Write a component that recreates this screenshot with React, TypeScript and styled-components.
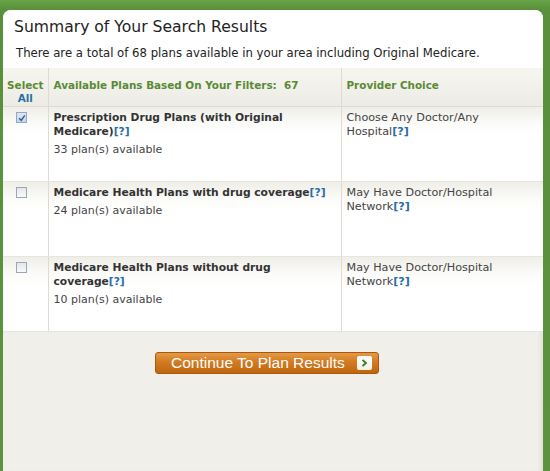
import styled, { createGlobalStyle } from "styled-components";

const GlobalStyle = createGlobalStyle`
  html, body {
    margin: 0;
    padding: 0;
  }
  body {
    font-family: "DejaVu Sans", Verdana, sans-serif;
  }
`;

const green = "#5d933e";
const headGreen = "#5a8a34";
const linkBlue = "#2b6ea3";
const lineColor = "#dedcd2";

const Frame = styled.div`
  width: 550px;
  height: 471px;
  box-sizing: border-box;
  padding: 10px 7px 0 3px;
  background: linear-gradient(to bottom, #68a447 0, #5a8f3b 10px, ${green} 100%);
`;

const Panel = styled.div`
  height: 100%;
  background: #f0efe9;
  border-radius: 8px 8px 0 0;
  overflow: hidden;
  box-shadow: inset -5px 0 5px -3px rgba(0, 0, 0, 0.08);
`;

const Header = styled.div`
  background: #fff;
  padding: 8px 12px 7px 11px;
`;

const Title = styled.h2`
  margin: 0;
  font-size: 15.6px;
  line-height: 18px;
  font-weight: normal;
  color: #222;
`;

const Subtitle = styled.p`
  margin: 10px 0 0 2px;
  font-size: 11.7px;
  line-height: 15px;
  color: #222;
`;

const Table = styled.table`
  width: 100%;
  border-collapse: collapse;
  table-layout: fixed;
`;

const HeadCell = styled.th<{ $w?: number; $center?: boolean }>`
  width: ${(p) => (p.$w ? `${p.$w}px` : "auto")};
  height: 38px;
  box-sizing: border-box;
  padding: 11px 5px 0;
  vertical-align: top;
  text-align: ${(p) => (p.$center ? "center" : "left")};
  font-size: 10.4px;
  line-height: 13px;
  font-weight: bold;
  color: ${headGreen};
  background: linear-gradient(to bottom, #f6f5f0, #ecebe4);
  border-left: 1px solid ${lineColor};
  border-bottom: 1px solid ${lineColor};

  &:first-child {
    border-left: none;
    padding: 11px 0 0;
  }
`;

const AllLink = styled.span`
  color: ${linkBlue};
`;

const Row = styled.tr`
  height: 75px;
  background: linear-gradient(to bottom, #eeede7 0, #fbfbf9 18px, #fff 30px);
`;

const Cell = styled.td`
  vertical-align: top;
  padding: 4px 10px 0 5px;
  font-size: 11px;
  line-height: 14px;
  color: #444;
  border-left: 1px solid ${lineColor};
  border-bottom: 1px solid #e6e5de;

  &:first-child {
    border-left: none;
    padding: 5px 0 0 13px;
  }
`;

const ProviderCell = styled(Cell)`
  font-size: 11.2px;
`;

const PlanName = styled.div`
  font-weight: bold;
  font-size: 10.7px;
  color: #333;
`;

const Count = styled.div`
  margin-top: 4px;
  color: #444;
`;

const Help = styled.span`
  color: ${linkBlue};
  font-weight: bold;
`;

const Box = styled.span<{ $checked?: boolean }>`
  display: inline-flex;
  align-items: center;
  justify-content: center;
  width: 11px;
  height: 11px;
  box-sizing: border-box;
  border: 1px solid #9aa7b8;
  background: ${(p) =>
    p.$checked
      ? "linear-gradient(to bottom, #dde8f4, #c4d6ea)"
      : "linear-gradient(to bottom, #e6e6e6, #fafafa)"};
`;

const Footer = styled.div`
  display: flex;
  justify-content: center;
  padding: 20px 12px 0 0;
`;

const Button = styled.button`
  display: flex;
  align-items: center;
  gap: 12px;
  width: 224px;
  height: 22px;
  padding: 0 5px 0 15px;
  box-sizing: border-box;
  border: 1px solid #a9590f;
  border-radius: 3px;
  background: linear-gradient(to bottom, #e59a45 0, #d27a22 45%, #c0650f 100%);
  color: #fff;
  font-family: "Liberation Sans", Arial, sans-serif;
  font-size: 15.5px;
  cursor: pointer;
`;

const Arrow = styled.span`
  display: inline-flex;
  align-items: center;
  justify-content: center;
  width: 15px;
  height: 14px;
  border-radius: 2px;
  background: linear-gradient(to bottom, #ffffff, #eef2e2);
`;

const plans = [
  {
    name: "Prescription Drug Plans (with Original Medicare)",
    count: 33,
    provider: "Choose Any Doctor/Any Hospital",
    checked: true,
  },
  {
    name: "Medicare Health Plans with drug coverage",
    count: 24,
    provider: "May Have Doctor/Hospital Network",
    checked: false,
  },
  {
    name: "Medicare Health Plans without drug coverage",
    count: 10,
    provider: "May Have Doctor/Hospital Network",
    checked: false,
  },
];

const App = () => {
  return (
    <>
      <GlobalStyle />
      <Frame>
        <Panel>
          <Header>
            <Title>Summary of Your Search Results</Title>
            <Subtitle>
              There are a total of 68 plans available in your area including Original Medicare.
            </Subtitle>
          </Header>
          <Table>
            <thead>
              <tr>
                <HeadCell $w={45} $center>
                  Select
                  <br />
                  <AllLink>All</AllLink>
                </HeadCell>
                <HeadCell $w={293}>Available Plans Based On Your Filters:&nbsp;&nbsp;67</HeadCell>
                <HeadCell>Provider Choice</HeadCell>
              </tr>
            </thead>
            <tbody>
              {plans.map((plan) => (
                <Row key={plan.name}>
                  <Cell>
                    <Box $checked={plan.checked}>
                      {plan.checked && (
                        <svg width="8" height="8" viewBox="0 0 8 8">
                          <path d="M1.2 4.2 L3.2 6.4 L6.8 1.4" fill="none" stroke="#2d5c9a" strokeWidth="1.4" />
                        </svg>
                      )}
                    </Box>
                  </Cell>
                  <Cell>
                    <PlanName>
                      {plan.name}
                      <Help>[?]</Help>
                    </PlanName>
                    <Count>{plan.count} plan(s) available</Count>
                  </Cell>
                  <ProviderCell>
                    {plan.provider}
                    <Help>[?]</Help>
                  </ProviderCell>
                </Row>
              ))}
            </tbody>
          </Table>
          <Footer>
            <Button>
              Continue To Plan Results
              <Arrow>
                <svg width="7" height="8" viewBox="0 0 7 8">
                  <path d="M1.5 1 L5 4 L1.5 7" fill="none" stroke="#3d7a2a" strokeWidth="1.8" />
                </svg>
              </Arrow>
            </Button>
          </Footer>
        </Panel>
      </Frame>
    </>
  );
};

export default App;
